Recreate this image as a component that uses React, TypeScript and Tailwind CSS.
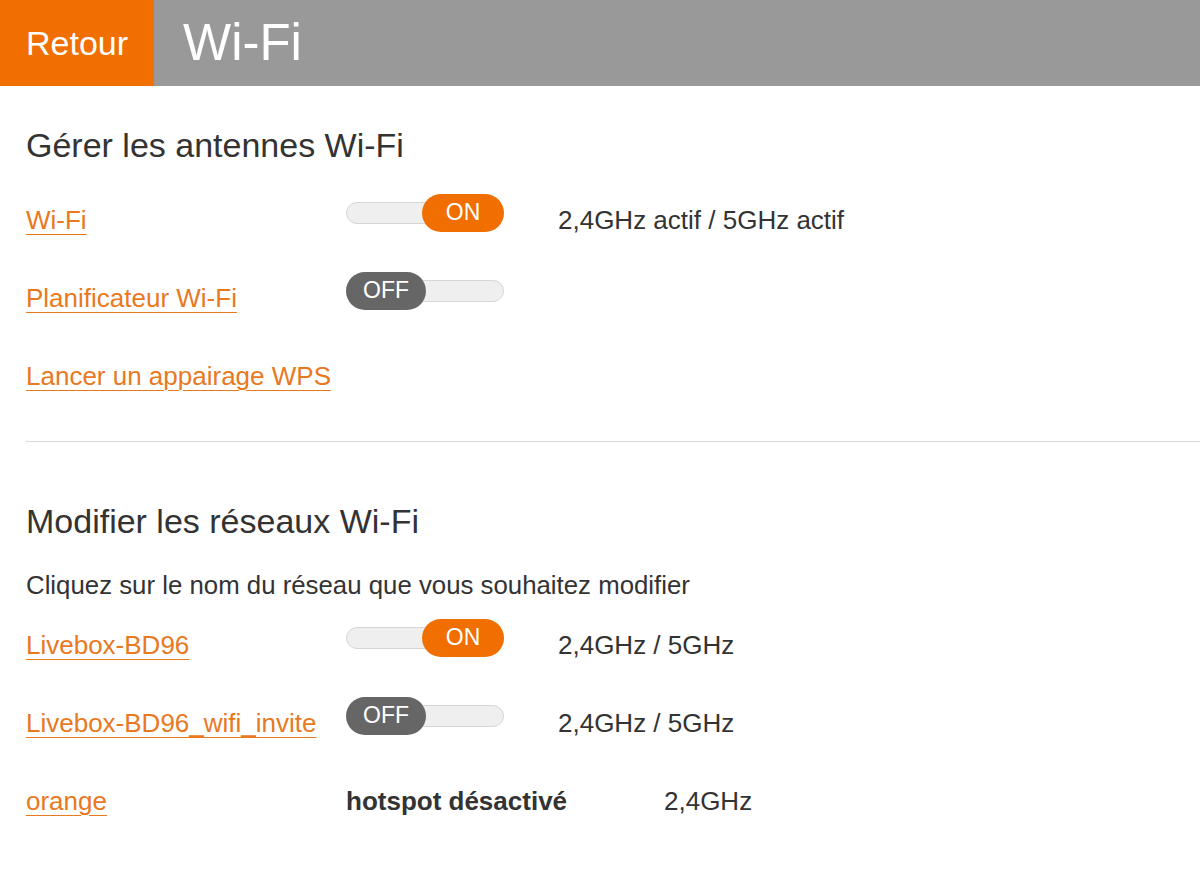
import React from "react";

const font = { fontFamily: '"Liberation Sans", Arial, sans-serif' };

function Toggle({ on }: { on: boolean }) {
	return (
		<div className="relative mb-[14px] flex h-[38px] w-[158px] shrink-0 items-center">
			<div className="h-[22px] w-full rounded-full border border-[#d6d6d6] bg-[#efefef]" />
			{on ? (
				<div className="absolute right-0 top-0 flex h-[38px] w-[82px] items-center justify-center rounded-full bg-[#f16e00] pb-[2px] text-[23px] text-white">ON</div>
			) : (
				<div className="absolute left-0 top-0 flex h-[38px] w-[80px] items-center justify-center rounded-full bg-[#666666] pb-[2px] text-[23px] text-white">OFF</div>
			)}
		</div>
	);
}

function Row({ label, children }: { label: string; children: React.ReactNode }) {
	return (
		<div className="flex h-[78px] items-center">
			<a href="#" className="w-[320px] shrink-0 text-[26px] text-[#e8791f] underline decoration-1 underline-offset-[5px]">
				{label}
			</a>
			{children}
		</div>
	);
}

export default function App() {
	return (
		<div className="min-h-[877px] w-[1200px] bg-white text-[#333333]" style={font}>
			<header className="flex h-[86px]">
				<a href="#" className="flex w-[154px] items-center justify-center bg-[#f16e00] text-[34px] text-white">
					Retour
				</a>
				<div className="flex flex-1 items-center bg-[#999999] pl-[29px]">
					<h1 className="text-[51px] text-white">Wi-Fi</h1>
				</div>
			</header>

			<section className="pl-[26px] pt-[40px]">
				<h2 className="text-[34px] leading-[38px]">Gérer les antennes Wi-Fi</h2>
				<div className="mt-[17px]">
					<Row label="Wi-Fi">
						<Toggle on />
						<span className="ml-[54px] text-[26px]">2,4GHz actif / 5GHz actif</span>
					</Row>
					<Row label="Planificateur Wi-Fi">
						<Toggle on={false} />
					</Row>
					<Row label="Lancer un appairage WPS">{null}</Row>
				</div>
				<hr className="mt-[26px] border-t border-[#d9d9d9]" />
			</section>

			<section className="pl-[26px] pt-[60px]">
				<h2 className="text-[34px] leading-[38px]">Modifier les réseaux Wi-Fi</h2>
				<p className="mt-[29px] text-[25.8px] leading-[33px]">Cliquez sur le nom du réseau que vous souhaitez modifier</p>
				<div className="mt-[4px]">
					<Row label="Livebox-BD96">
						<Toggle on />
						<span className="ml-[54px] text-[26px]">2,4GHz / 5GHz</span>
					</Row>
					<Row label="Livebox-BD96_wifi_invite">
						<Toggle on={false} />
						<span className="ml-[54px] text-[26px]">2,4GHz / 5GHz</span>
					</Row>
					<Row label="orange">
						<span className="w-[318px] shrink-0 text-[26px] font-bold">hotspot désactivé</span>
						<span className="text-[26px]">2,4GHz</span>
					</Row>
				</div>
			</section>
		</div>
	);
}
